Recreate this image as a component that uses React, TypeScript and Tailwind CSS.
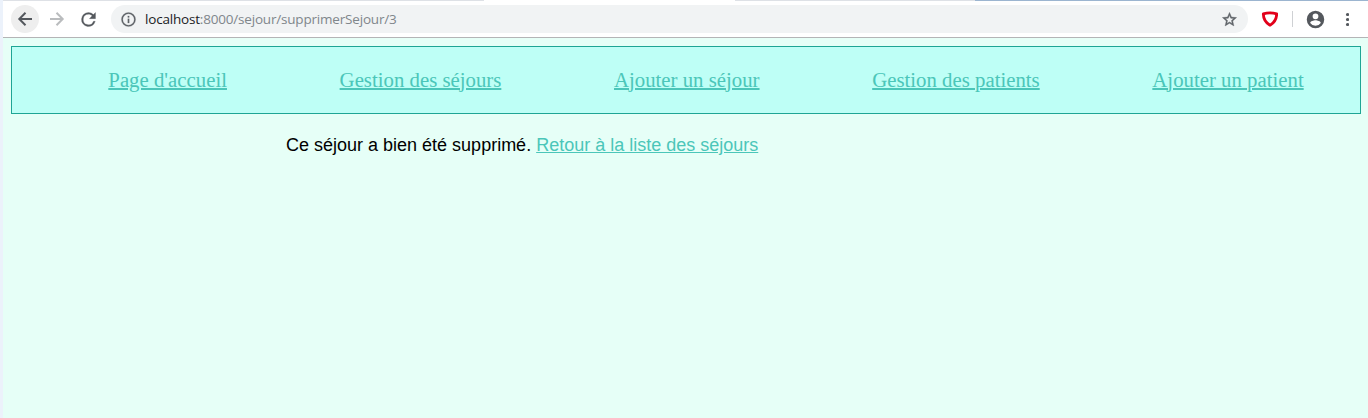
import React from "react";

const links: string[] = [
  "Page d'accueil",
  "Gestion des séjours",
  "Ajouter un séjour",
  "Gestion des patients",
  "Ajouter un patient",
];

function BackIcon() {
  return (
    <svg className="size-5" viewBox="0 0 20 20" fill="none" stroke="#54585d" strokeWidth="2">
      <path d="M17 10H4.500M10.500 3.800L4.300 10l6.200 6.200" />
    </svg>
  );
}

function ForwardIcon() {
  return (
    <svg className="size-5" viewBox="0 0 20 20" fill="none" stroke="#babcbe" strokeWidth="2">
      <path d="M3 10h12.500M9.500 3.800l6.200 6.200-6.200 6.200" />
    </svg>
  );
}

function ReloadIcon() {
  return (
    <svg className="size-[21px]" viewBox="0 0 24 24" fill="#54585d" stroke="#54585d" strokeWidth="0.300">
      <path d="M17.650 6.350A7.958 7.958 0 0 0 12 4a8 8 0 1 0 7.730 10h-2.080A6 6 0 1 1 12 6c1.660 0 3.140.69 4.220 1.780L13 11h7V4z" />
    </svg>
  );
}

function InfoIcon() {
  return (
    <svg className="size-[17px]" viewBox="0 0 24 24" fill="#5f6368" stroke="#5f6368" strokeWidth="0.300">
      <path d="M11 17h2v-6h-2v6zm1-15a10 10 0 1 0 0 20 10 10 0 0 0 0-20zm0 18a8 8 0 1 1 0-16 8 8 0 0 1 0 16zM11 9h2V7h-2v2z" />
    </svg>
  );
}

function StarIcon() {
  return (
    <svg className="size-[17px]" viewBox="0 0 24 24" fill="#5f6368" stroke="#5f6368" strokeWidth="0.600">
      <path d="M22 9.240l-7.190-.62L12 2 9.190 8.630 2 9.240l5.460 4.730L5.820 21 12 17.270 18.180 21l-1.630-7.030L22 9.240zM12 15.400l-3.760 2.270 1-4.280-3.320-2.880 4.380-.38L12 6.100l1.710 4.040 4.380.38-3.320 2.880 1 4.280L12 15.400z" />
    </svg>
  );
}

function ShieldIcon() {
  return (
    <svg className="h-4 w-[17px]" viewBox="0 0 17 16">
      <path
        d="M2.300 2.900Q9 .9 15.700 2.900Q15.500 10.500 9 14.200Q2.500 10.500 2.300 2.900Z"
        fill="#fff"
        stroke="#e2001a"
        strokeWidth="2.800"
        strokeLinejoin="round"
      />
    </svg>
  );
}

function ProfileIcon() {
  return (
    <svg className="size-[21px]" viewBox="0 0 24 24" fill="#54585d">
      <path d="M12 2a10 10 0 1 0 0 20 10 10 0 0 0 0-20zm0 3a3.300 3.300 0 1 1 0 6.600A3.300 3.300 0 0 1 12 5zm0 14.200a7.200 7.200 0 0 1-6-3.220c.03-1.990 4-3.080 6-3.080s5.970 1.090 6 3.080a7.200 7.200 0 0 1-6 3.220z" />
    </svg>
  );
}

function MenuIcon() {
  return (
    <svg className="h-4 w-1" viewBox="0 0 4 16" fill="#54585d">
      <circle cx="2.500" cy="3.500" r="1.600" />
      <circle cx="2.500" cy="8.500" r="1.600" />
      <circle cx="2.500" cy="13.500" r="1.600" />
    </svg>
  );
}

function Toolbar() {
  return (
    <header className="h-[38px] border-b border-[#b4b4b6] bg-white">
      <div className="flex h-px">
        <div className="w-[481px] bg-[#dee1e6]" />
        <div className="w-[251px] bg-white" />
        <div className="w-[240px] bg-[#dee1e6]" />
        <div className="flex-1 bg-[#9cb5d0]" />
      </div>
      <div className="flex h-9 items-center pl-2">
        <div className="flex size-7 items-center justify-center rounded-full bg-[#eeeeee]">
          <BackIcon />
        </div>
        <div className="ml-2 flex w-5 justify-center">
          <ForwardIcon />
        </div>
        <div className="ml-[11px] flex w-[21px] justify-center">
          <ReloadIcon />
        </div>
        <div className="ml-3 flex h-7 w-[1137px] items-center rounded-full bg-[#f1f3f4] pr-[10px] pl-[9px]">
          <InfoIcon />
          <span className="ml-2 flex-1 font-['Open_Sans',sans-serif] text-[13.500px] leading-5 tracking-[-0.190px] whitespace-nowrap text-[#80868b]">
            <span className="text-[#202124]">localhost</span>:8000/sejour/supprimerSejour/3
          </span>
          <StarIcon />
        </div>
        <div className="ml-[13px]">
          <ShieldIcon />
        </div>
        <div className="ml-[14px] h-4 w-px bg-[#cfd1d4]" />
        <div className="ml-3">
          <ProfileIcon />
        </div>
        <div className="ml-[19px]">
          <MenuIcon />
        </div>
      </div>
    </header>
  );
}

export default function App() {
  return (
    <div className="h-[418px] overflow-hidden bg-[#ecf2fb] pl-[3px]">
      <div className="h-full bg-[#e6fff7]">
        <Toolbar />
        <nav className="mt-2 mr-[7px] ml-2 h-[68px] border border-[#1fa595] bg-[#befff6]">
          <ul className="flex h-full items-center justify-around pl-10">
            {links.map((label) => (
              <li key={label}>
                <a
                  href="#"
                  className="font-['Liberation_Serif',serif] text-[20.800px] leading-6 whitespace-nowrap text-[#4bc6b9] underline decoration-2"
                >
                  {label}
                </a>
              </li>
            ))}
          </ul>
        </nav>
        <p className="mt-5 ml-[283px] font-['Liberation_Sans',sans-serif] text-[18px] leading-[22px] text-black">
          Ce séjour a bien été supprimé.{" "}
          <a href="#" className="text-[#4bc6b9] underline">
            Retour à la liste des séjours
          </a>
        </p>
      </div>
    </div>
  );
}
